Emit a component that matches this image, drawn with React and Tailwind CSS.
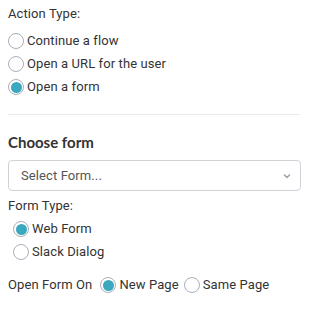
import React, { useState } from 'react';

const Radio = ({ checked, label, onClick }) => (
  <label className="flex items-center cursor-pointer" onClick={onClick}>
    <span className="w-4 h-4 rounded-full border border-[#a9afba] bg-white flex items-center justify-center shrink-0">
      {checked && <span className="w-[11px] h-[11px] rounded-full bg-[#3aa8bf]" />}
    </span>
    <span className="ml-[3px]">{label}</span>
  </label>
);

const App = () => {
  const [action, setAction] = useState('form');
  const [formType, setFormType] = useState('web');
  const [openOn, setOpenOn] = useState('new');

  return (
    <div className="w-[310px] h-[313px] bg-white px-2 pt-[5px] text-[13px] text-[#333] tracking-[0.1px] font-['Roboto',sans-serif]">
      <div className="leading-[18px]">Action Type:</div>
      <div className="flex flex-col gap-[5px] mt-[9px] leading-[18px]">
        <Radio checked={action === 'flow'} label="Continue a flow" onClick={() => setAction('flow')} />
        <Radio checked={action === 'url'} label="Open a URL for the user" onClick={() => setAction('url')} />
        <Radio checked={action === 'form'} label="Open a form" onClick={() => setAction('form')} />
      </div>
      <div className="border-t border-[#eaeaea] mt-[18px] w-[292px]" />
      <div className="mt-[17px] text-[15px] font-bold tracking-normal text-[#333] font-['Lato',sans-serif] leading-[20px]">Choose form</div>
      <div className="mt-[8px] w-[293px] h-[31px] border border-[#cfd3d8] rounded-[4px] flex items-center justify-between pl-3 pr-[9px] text-[#555]">
        <span>Select Form...</span>
        <svg width="8" height="5" viewBox="0 0 8 5" className="mt-[2px]">
          <path d="M1.5 1 L4 3.5 L6.5 1" fill="none" stroke="#9aa3ad" strokeWidth="1.5" strokeLinecap="round" strokeLinejoin="round" />
        </svg>
      </div>
      <div className="mt-[6px] leading-[18px]">Form Type:</div>
      <div className="flex flex-col gap-[5px] mt-[5px] pl-[5px] leading-[18px]">
        <Radio checked={formType === 'web'} label="Web Form" onClick={() => setFormType('web')} />
        <Radio checked={formType === 'slack'} label="Slack Dialog" onClick={() => setFormType('slack')} />
      </div>
      <div className="flex items-center mt-[15px] leading-[18px]">
        <span className="mr-[8px]">Open Form On</span>
        <Radio checked={openOn === 'new'} label="New Page" onClick={() => setOpenOn('new')} />
        <span className="w-[5px]" />
        <Radio checked={openOn === 'same'} label="Same Page" onClick={() => setOpenOn('same')} />
      </div>
    </div>
  );
};

export default App;
